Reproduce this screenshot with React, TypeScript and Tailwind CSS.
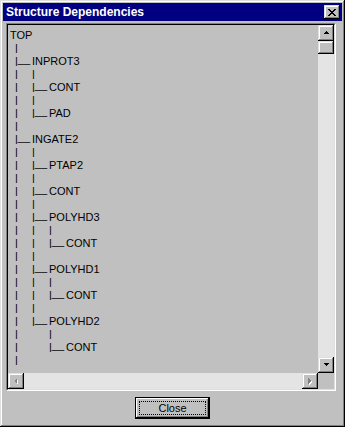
const raised =
  "shadow-[inset_-1px_-1px_0_#000,inset_1px_1px_0_#dfdfdf,inset_-2px_-2px_0_#808080,inset_2px_2px_0_#fff]";

type Row = { bars: boolean[]; label?: string };

// bars: one entry per tree column; label rows end with the "|__" connector
const rows: Row[] = [
  { bars: [], label: "TOP" },
  { bars: [true] },
  { bars: [], label: "INPROT3" },
  { bars: [true, true] },
  { bars: [true], label: "CONT" },
  { bars: [true, true] },
  { bars: [true], label: "PAD" },
  { bars: [true] },
  { bars: [], label: "INGATE2" },
  { bars: [true, true] },
  { bars: [true], label: "PTAP2" },
  { bars: [true, true] },
  { bars: [true], label: "CONT" },
  { bars: [true, true] },
  { bars: [true], label: "POLYHD3" },
  { bars: [true, true, true] },
  { bars: [true, true], label: "CONT" },
  { bars: [true, true] },
  { bars: [true], label: "POLYHD1" },
  { bars: [true, true, true] },
  { bars: [true, true], label: "CONT" },
  { bars: [true, true] },
  { bars: [true], label: "POLYHD2" },
  { bars: [true, false, true] },
  { bars: [true, false], label: "CONT" },
  { bars: [true] },
];

// "|" squashed a little to the short stroke the old listbox font draws
function Bar() {
  return <span className="block origin-top scale-y-[0.86]">|</span>;
}

function TreeRow({ row, index }: { row: Row; index: number }) {
  if (index === 0) {
    return <div className="h-[13px] whitespace-pre">{row.label}</div>;
  }
  return (
    <div className="flex h-[13px] whitespace-pre">
      <span className="w-[5px] shrink-0" />
      {row.bars.map((b, i) => (
        <span key={i} className="w-[17px] shrink-0">
          {b ? <Bar /> : ""}
        </span>
      ))}
      {row.label && (
        <>
          <span className="flex w-[17px] shrink-0">
            <Bar />
            <span className="-translate-y-[2px]">__</span>
          </span>
          <span>{row.label}</span>
        </>
      )}
    </div>
  );
}

function Arrow({ dir, disabled }: { dir: "up" | "down" | "left" | "right"; disabled?: boolean }) {
  const pts = {
    up: "4,1 1,4 7,4",
    down: "1,1 7,1 4,4",
    left: "4,1 1,4 4,7",
    right: "1,1 4,4 1,7",
  }[dir];
  const horiz = dir === "left" || dir === "right";
  const w = horiz ? 5 : 8;
  const h = horiz ? 8 : 5;
  return (
    <svg width={w + 1} height={h + 1} viewBox={`0 0 ${w + 1} ${h + 1}`} shapeRendering="crispEdges">
      {disabled && <polygon points={pts} fill="#fff" transform="translate(1,1)" />}
      <polygon points={pts} fill={disabled ? "#808080" : "#000"} />
    </svg>
  );
}

function ScrollButton({ dir, disabled }: { dir: "up" | "down" | "left" | "right"; disabled?: boolean }) {
  return (
    <div className={`flex h-[16px] w-[16px] shrink-0 items-center justify-center bg-[#c0c0c0] ${raised}`}>
      <Arrow dir={dir} disabled={disabled} />
    </div>
  );
}

export default function App() {
  return (
    <div
      className={`flex h-[427px] w-[345px] flex-col bg-[#c0c0c0] p-[3px] ${raised}`}
      style={{ fontFamily: '"Liberation Sans", Arial, sans-serif' }}
    >
      {/* Title bar */}
      <div className="flex h-[18px] shrink-0 items-center justify-between bg-[#000080] pl-[3px] pr-[2px]">
        <span className="text-[12px] font-bold leading-[18px] text-white">Structure Dependencies</span>
        <div className={`flex h-[14px] w-[16px] items-center justify-center bg-[#c0c0c0] ${raised}`}>
          <svg width="8" height="7" viewBox="0 0 8 7" shapeRendering="crispEdges">
            <path d="M0 0h2v1h-2zM6 0h2v1h-2zM1 1h2v1h-2zM5 1h2v1h-2zM2 2h4v1h-4zM3 3h2v1h-2zM2 4h4v1h-4zM1 5h2v1h-2zM5 5h2v1h-2zM0 6h2v1h-2zM6 6h2v1h-2z" fill="#000" />
          </svg>
        </div>
      </div>

      {/* Tree panel */}
      <div className="ml-[3px] mt-[2px] h-[368px] w-[330px] shrink-0 border border-b-white border-l-[#808080] border-r-white border-t-[#808080]">
        <div className="grid h-full w-full grid-cols-[310px_16px] grid-rows-[348px_16px] border border-b-[#dfdfdf] border-l-black border-r-[#dfdfdf] border-t-black">
          <div className="overflow-hidden pl-[2px] pt-[4px] text-[11px] leading-[13px] text-black">
            {rows.map((r, i) => (
              <TreeRow key={i} row={r} index={i} />
            ))}
          </div>

          {/* Vertical scrollbar */}
          <div className="flex flex-col bg-[#e4e4e4]">
            <ScrollButton dir="up" />
            <div className={`h-[13px] w-[16px] bg-[#c0c0c0] ${raised}`} />
            <div className="flex-1" />
            <ScrollButton dir="down" />
          </div>

          {/* Horizontal scrollbar */}
          <div className="flex bg-[#e4e4e4]">
            <ScrollButton dir="left" disabled />
            <div className="flex-1" />
            <ScrollButton dir="right" disabled />
          </div>
          <div className="bg-[#c0c0c0]" />
        </div>
      </div>

      {/* Footer */}
      <div className="flex justify-center pt-[6px]">
        <button className="h-[22px] w-[75px] border border-black bg-[#c0c0c0] p-0">
          <div className="h-full w-full p-[3px] shadow-[inset_-1px_-1px_0_#000,inset_1px_1px_0_#fff,inset_-2px_-2px_0_#808080]">
            <div className="flex h-full w-full items-center justify-center border border-dotted border-black text-[11px] leading-none text-black">
              Close
            </div>
          </div>
        </button>
      </div>
    </div>
  );
}
